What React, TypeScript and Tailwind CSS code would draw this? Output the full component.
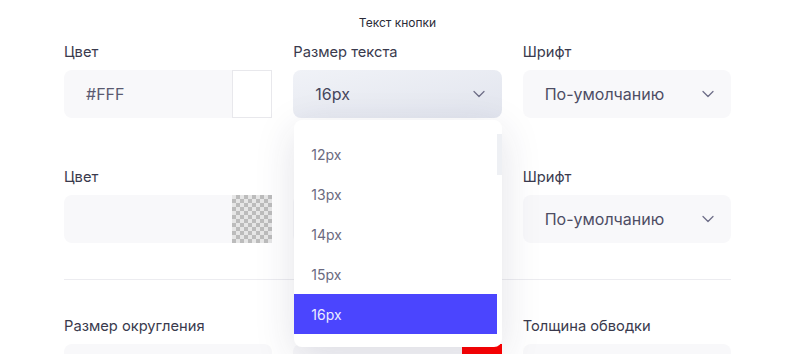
import React from 'react';
import { ChevronDown } from 'lucide-react';

const Label = ({ children }: { children?: React.ReactNode }) => (
  <div className="h-5 mb-2 text-[14.7px] leading-5 text-[#3a3a4d]">{children}</div>
);

const ColorInput = ({ value, swatch }: { value?: string; swatch: 'white' | 'checker' | 'red' }) => (
  <div className="flex h-12 rounded-l-lg bg-[#f8f8fa]">
    <div className="flex-1 flex items-center pl-[22px] text-[16px] text-[#5a5a70]">{value}</div>
    {swatch === 'white' && <div className="w-10 h-12 bg-white border border-[#e8e8ec]" />}
    {swatch === 'checker' && (
      <div className="w-10 h-12 bg-[repeating-conic-gradient(#bcbcbc_0_25%,#e6e6e6_0_50%)] bg-[length:8px_8px]" />
    )}
    {swatch === 'red' && <div className="w-10 h-12 bg-[#ff0000]" />}
  </div>
);

const Select = ({ value, active }: { value?: string; active?: boolean }) => (
  <div
    className={`flex h-12 items-center justify-between rounded-lg pl-[22px] pr-[13px] text-[16px] ${
      active ? 'bg-gradient-to-br from-[#f0f2f7] to-[#e2e5ee] text-[#46465c]' : 'bg-[#f8f8fa] text-[#4d4d64]'
    }`}
  >
    <span>{value}</span>
    <ChevronDown size={20} strokeWidth={1.5} className="text-[#6e6e88]" />
  </div>
);

const options = ['12px', '13px', '14px', '15px', '16px'];

export default function App() {
  return (
    <div className="min-h-screen bg-white font-['Inter',sans-serif]">
      <div className="w-[667px] ml-16 pt-[15px]">
        <div className="h-4 text-center text-[12px] leading-4 text-[#2b2b38]">Текст кнопки</div>

        <div className="mt-[11px] grid grid-cols-3 gap-x-[21px] gap-y-[49px]">
          <div>
            <Label>Цвет</Label>
            <ColorInput value="#FFF" swatch="white" />
          </div>
          <div className="relative">
            <Label>Размер текста</Label>
            <Select value="16px" active />
            {/* открытый список размеров */}
            <div className="absolute left-px right-0 top-[78px] z-10 h-[227px] overflow-hidden rounded-lg bg-white pt-[14px] shadow-[0_10px_40px_rgba(40,40,80,0.13)]">
              <div className="absolute right-0 top-[14px] h-[41px] w-[5px] bg-[#eef0f4]" />
              {options.map((o) => (
                <div
                  key={o}
                  className={`mr-[5px] flex h-10 items-center pl-[17px] text-[14px] ${
                    o === '16px' ? 'bg-[#4b45fe] text-[#ececff]' : 'text-[#6b6a80]'
                  }`}
                >
                  {o}
                </div>
              ))}
            </div>
          </div>
          <div>
            <Label>Шрифт</Label>
            <Select value="По-умолчанию" />
          </div>

          <div>
            <Label>Цвет</Label>
            <ColorInput swatch="checker" />
          </div>
          <div>
            <Label />
            <Select />
          </div>
          <div>
            <Label>Шрифт</Label>
            <Select value="По-умолчанию" />
          </div>
        </div>

        <div className="my-[36px] h-px bg-[#ececf0]" />

        <div className="grid grid-cols-3 gap-x-[21px]">
          <div>
            <Label>Размер округления</Label>
            <Select />
          </div>
          <div>
            <Label />
            <ColorInput swatch="red" />
          </div>
          <div>
            <Label>Толщина обводки</Label>
            <Select />
          </div>
        </div>
      </div>
    </div>
  );
}
